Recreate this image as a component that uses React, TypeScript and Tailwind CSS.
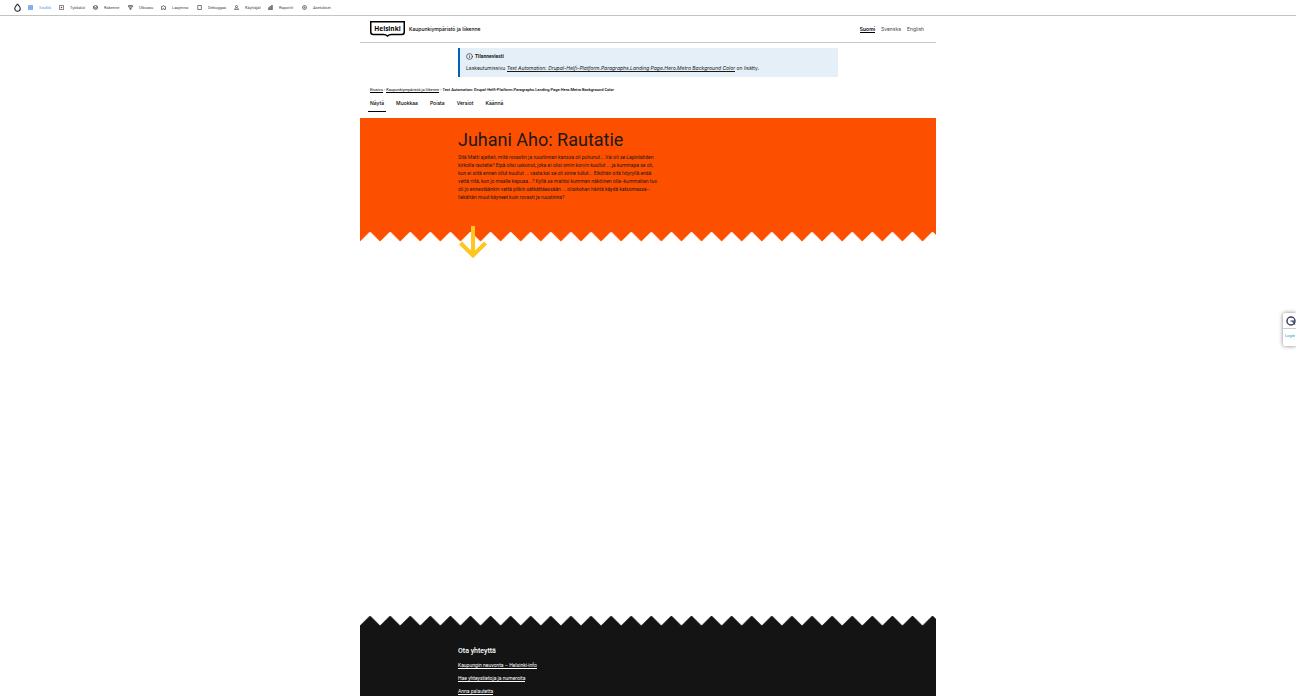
import React from "react";
import { Info } from "lucide-react";

const toolbarItems = [
  {
    label: "Sisältö",
    icon: "M1.500 1.500h17v17h-17ZM1.500 7h17M1.500 12h17M10 7v11",
    active: true,
    width: "w-[31px]",
  },
  { label: "Työkalut", icon: "M1.500 1.500h17v17h-17ZM7 10h6M10 7v6", width: "w-[34px]" },
  {
    label: "Rakenne",
    icon: "M10 1.500L18 5.500L10 9.500L2 5.500ZM2 5.500v9l8 4l8-4v-9M2 10l8 4l8-4",
    width: "w-[35px]",
  },
  { label: "Ulkoasu", icon: "M2.500 2h15v6l-4.500 4h-6L2.500 8ZM2.500 7h15M8.500 12v6.500h3V12", width: "w-[33px]" },
  {
    label: "Laajenna",
    icon: "M2 18.500V6h4.500a3.500 3.500 0 1 1 7 0H18v12.500h-5v-2a3 3 0 1 0-6 0v2Z",
    width: "w-[36px]",
  },
  { label: "Debuggaa", icon: "M3 2h14.500v16h-14.500Z", width: "w-[37px]" },
  {
    label: "Käyttäjät",
    icon: "M6 6a4 4 0 1 0 8 0a4 4 0 1 0-8 0M1.500 18.500c1-5 4-7 8.500-7s7.500 2 8.500 7Z",
    width: "w-[34px]",
  },
  { label: "Raportit", icon: "M1.500 11h5v7.500h-5ZM7.500 6h5v12.500h-5ZM13.500 2h5v16.500h-5Z", width: "w-[34px]" },
  {
    label: "Asetukset",
    icon: "M2 10a8 8 0 1 0 16 0a8 8 0 1 0-16 0M7.500 10a2.500 2.500 0 1 0 5 0a2.500 2.500 0 1 0-5 0",
    width: "w-[34px]",
  },
];

const tabs = ["Näytä", "Muokkaa", "Poista", "Versiot", "Käännä"];

const footerLinks = [
  "Kaupungin neuvonta – Helsinki-info",
  "Hae yhteystietoja ja numeroita",
  "Anna palautetta",
];

const pageName =
  "Test Automation: Drupal-Helfi-Platform.Paragraphs.Landing Page.Hero.Metro Background Color";

function Toolbar() {
  return (
    <nav
      aria-label="Hallinta"
      className="flex h-4 items-center border-b border-[#c4c4c4] bg-white pl-[14px] text-[4px] leading-[6px] text-[#45464c]"
    >
      <a href="#" aria-label="Etusivu" className="mr-[7px] block w-[7px]">
        <svg viewBox="0 0 14 18" className="h-[9px] w-[7px]">
          <path
            d="M7 1.500C6.500 4 1.500 6.500 1.500 11a5.500 5.500 0 0 0 11 0C12.500 6.500 7.500 4 7 1.500Z"
            fill="none"
            stroke="#232429"
            strokeWidth="2.200"
          />
        </svg>
      </a>
      {toolbarItems.map(({ label, icon, active, width }) => (
        <a
          key={label}
          href="#"
          className={`flex items-center gap-[6px] whitespace-nowrap ${width} ${active ? "text-[#5b94ee]" : ""}`}
        >
          <svg viewBox="0 0 20 20" className="size-[5px] shrink-0" aria-hidden="true">
            <path
              d={icon}
              fill={active ? "currentColor" : "none"}
              fillOpacity="0.400"
              stroke="currentColor"
              strokeWidth="2.800"
            />
          </svg>
          {label}
        </a>
      ))}
    </nav>
  );
}

function HelsinkiLogo() {
  return (
    <svg viewBox="0 0 35 16" className="h-4 w-[35px]" role="img" aria-label="Helsinki">
      <path
        d="M.750 .750h33.500v10.250a2.500 2.500 0 0 1-2.500 2.500H21.500c-2 0-3 .5-4 1.500-1-1-2-1.500-4-1.500H3.250A2.500 2.500 0 0 1 .750 11Z"
        fill="#fff"
        stroke="#000"
        strokeWidth="1.500"
      />
      <text
        x="17.500"
        y="9.500"
        textAnchor="middle"
        fontSize="6.500"
        fontWeight="700"
        className="font-['Open_Sans',sans-serif]"
      >
        Helsinki
      </text>
    </svg>
  );
}

function Header() {
  return (
    <header className="flex h-[27px] items-center justify-between border-b border-[#c8c8c8] pr-3 pl-[10px]">
      <a href="#" className="flex items-center gap-1 font-['Inter',sans-serif] text-[5px] font-medium text-black">
        <HelsinkiLogo />
        <span className="pt-px">Kaupunkiympäristö ja liikenne</span>
      </a>
      <div className="flex gap-[6px] pt-px font-['Inter',sans-serif] text-[5px] leading-[6px] text-[#444]">
        <a href="#" className="border-b border-black font-semibold text-black">
          Suomi
        </a>
        <a href="#">Svenska</a>
        <a href="#">English</a>
      </div>
    </header>
  );
}

function Notice() {
  return (
    <section
      aria-label="Tilanneviesti"
      className="mx-[98px] mt-[5px] border-l-2 border-[#0062b9] bg-[#e5eff8] px-[6px] pt-1 pb-[5px] text-[5px] text-[#1a1a1a]"
    >
      <h2 className="flex h-[9px] items-center gap-[2px] font-bold">
        <Info className="size-[7px]" strokeWidth={2} />
        Tilanneviesti
      </h2>
      <p className="mt-[3px] font-['Inter',sans-serif] leading-[8px]">
        Laskeutumissivu{" "}
        <a href="#" className="border-b border-[#1a1a1a] italic">
          {pageName}
        </a>{" "}
        on lisätty.
      </p>
    </section>
  );
}

function Zigzag({ id, color, down }: { id: string; color: string; down?: boolean }) {
  return (
    <svg className="block h-[10px] w-full" aria-hidden="true">
      <defs>
        <pattern id={id} width="20.090" height="10" patternUnits="userSpaceOnUse">
          <path
            d={down ? "M0 0H20.090V9.500L10.045 -.500L0 9.500Z" : "M0 9.500L10.045 -.500L20.090 9.500V10H0Z"}
            fill={color}
          />
        </pattern>
      </defs>
      <rect width="100%" height="10" fill={`url(#${id})`} />
    </svg>
  );
}

function Hero() {
  return (
    <section className="mt-[6px]">
      <div className="h-[114px] bg-[#fd4f00] px-[98px] pt-[10px] text-[#1a1a1a]">
        <h1 className="text-[18px] leading-6">Juhani Aho: Rautatie</h1>
        <p className="mt-px text-[5px] leading-[8px] whitespace-nowrap">
          Sitä Matti ajatteli, mitä rovastin ja ruustinnan kanssa oli puhunut... Vai oli se Lapinlahden
          <br />
          kirkolla rautatie? Eipä olisi uskonut, joka ei olisi omin korvin kuullut ... ja kummapa se oli,
          <br />
          kun ei siitä ennen ollut kuullut ... vasta kai se oli sinne tullut... Eiköhän sitä höyryllä enää
          <br />
          vettä riitä, kun jo maalle kapuaa...? Kyllä se mahtoi kumman näköinen olla--kummahan tuo
          <br />
          oli jo ennestäänkin vettä pitkin sätkättäessään ... olisikohan häntä käydä katsomassa--
          <br />
          liekähän muut käyneet kuin rovasti ja ruustinna?
        </p>
      </div>
      <div className="relative">
        <Zigzag id="hero-edge" color="#fd4f00" down />
        <svg
          viewBox="0 0 30 34"
          className="absolute top-[-6px] left-[98px] h-[34px] w-[30px]"
          aria-hidden="true"
        >
          <path d="M15 0V29M2.500 17L15 29.500L27.500 17" fill="none" stroke="#ffc61e" strokeWidth="4" />
        </svg>
      </div>
    </section>
  );
}

function Footer() {
  return (
    <footer>
      <Zigzag id="footer-edge" color="#141414" />
      <div className="h-[70px] bg-[#141414] px-[98px] pt-5 text-white">
        <h2 className="text-[7px] leading-[10px] font-medium">Ota yhteyttä</h2>
        <ul className="mt-[6px] flex flex-col items-start gap-[6px] text-[5px] leading-[6px]">
          {footerLinks.map((link) => (
            <li key={link}>
              <a href="#" className="block border-b border-white">
                {link}
              </a>
            </li>
          ))}
        </ul>
      </div>
    </footer>
  );
}

function LoginWidget() {
  return (
    <aside className="fixed top-[313px] right-0 flex w-[13px] flex-col overflow-hidden rounded-l-[2px] bg-white pb-[7px] shadow-[0_0_4px_rgba(0,0,0,0.5)]">
      <div className="flex h-4 items-center justify-end border-b border-[#ccc]">
        <svg viewBox="0 0 20 20" className="size-[10px]" aria-hidden="true">
          <circle cx="10" cy="10" r="8" fill="none" stroke="#3d4460" strokeWidth="3" />
          <path d="M9 10H18M12.500 10L18 17" stroke="#3d4460" strokeWidth="2.400" />
        </svg>
      </div>
      <a href="#" className="mt-1 pr-px text-right text-[4px] leading-[6px] text-[#1c9db5]">
        Login
      </a>
    </aside>
  );
}

export default function App() {
  return (
    <div className="flex min-h-screen flex-col bg-white font-['Roboto',sans-serif]">
      <Toolbar />
      <div className="mx-auto flex w-full max-w-xl flex-1 flex-col">
        <Header />
        <main className="flex-1">
          <Notice />
          <nav
            aria-label="Murupolku"
            className="mt-[10px] flex gap-px pl-[10px] text-[4px] leading-[5px] text-black"
          >
            <a href="#" className="border-b border-black">
              Etusivu
            </a>
            <span>›</span>
            <a href="#" className="border-b border-black">
              Kaupunkiympäristö ja liikenne
            </a>
            <span>›</span>
            <span className="font-medium">{pageName}</span>
          </nav>
          <nav
            aria-label="Välilehdet"
            className="mt-[6px] flex gap-2 pl-2 font-['Inter',sans-serif] text-[5px] font-medium text-black"
          >
            {tabs.map((tab, i) => (
              <a
                key={tab}
                href="#"
                className={`border-b px-[2px] pb-1 leading-[8px] ${i === 0 ? "border-black" : "border-transparent"}`}
              >
                {tab}
              </a>
            ))}
          </nav>
          <Hero />
        </main>
        <Footer />
      </div>
      <LoginWidget />
    </div>
  );
}
